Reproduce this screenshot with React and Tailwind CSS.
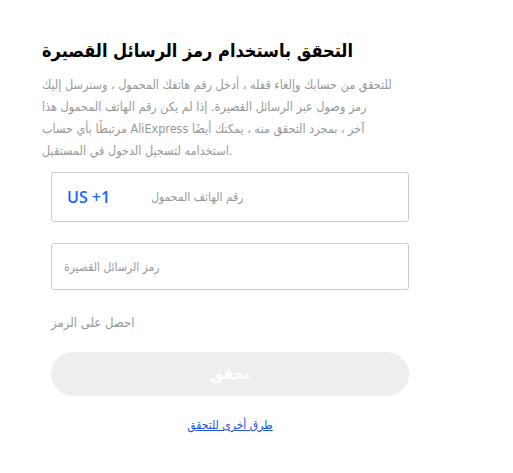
import React from "react";

const lines = [
  "للتحقق من حسابك وإلغاء قفله ، أدخل رقم هاتفك المحمول ، وسنرسل إليك",
  "رمز وصول عبر الرسائل القصيرة. إذا لم يكن رقم الهاتف المحمول هذا",
  "مرتبطًا بأي حساب AliExpress آخر ، بمجرد التحقق منه ، يمكنك أيضًا",
  "استخدامه لتسجيل الدخول في المستقبل.",
];

export default function App() {
  return (
    <div
      className="min-h-[473px] w-full bg-white pl-[42px] pt-[36px]"
      style={{ fontFamily: "'DejaVu Sans Condensed', Arial, 'Liberation Sans', sans-serif" }}
    >
      <div className="w-[360px]">
        <h1 className="whitespace-nowrap text-[18px] font-bold leading-[30px] text-black">
          التحقق باستخدام رمز الرسائل القصيرة
        </h1>
        <p className="mt-[8px] text-[12.5px] leading-[22px] text-[#999]">
          {lines.map((l) => (
            <span key={l} className="block whitespace-nowrap">
              {l}
            </span>
          ))}
        </p>
      </div>

      <div className="ml-[9px] mt-[10px] w-[358px]">
        <div className="flex h-[50px] items-center rounded-[3px] border border-[#ccc] pl-[15px]">
          <span
            className="text-[16px] font-semibold text-[#1a66ff]"
            style={{ fontFamily: "'Open Sans', sans-serif" }}
          >
            US +1
          </span>
          <span className="ml-[41px] text-[12px] text-[#999]">رقم الهاتف المحمول</span>
        </div>

        <div className="mt-[21px] flex h-[47px] items-center rounded-[3px] border border-[#ccc] pl-[12px]">
          <span className="text-[12px] text-[#999]">رمز الرسائل القصيرة</span>
        </div>

        <div className="mt-[24px] text-[13px] leading-[18px] text-[#999]">احصل على الرمز</div>

        <button className="mt-[20px] flex h-[44px] w-full items-center justify-center rounded-full bg-[#eeeeee] text-[16px] font-bold text-white">
          تحقق
        </button>

        <div className="mt-[16px] text-center">
          <a href="#" className="text-[12px] text-[#1a55e0] underline">
            طرق أخرى للتحقق
          </a>
        </div>
      </div>
    </div>
  );
}
